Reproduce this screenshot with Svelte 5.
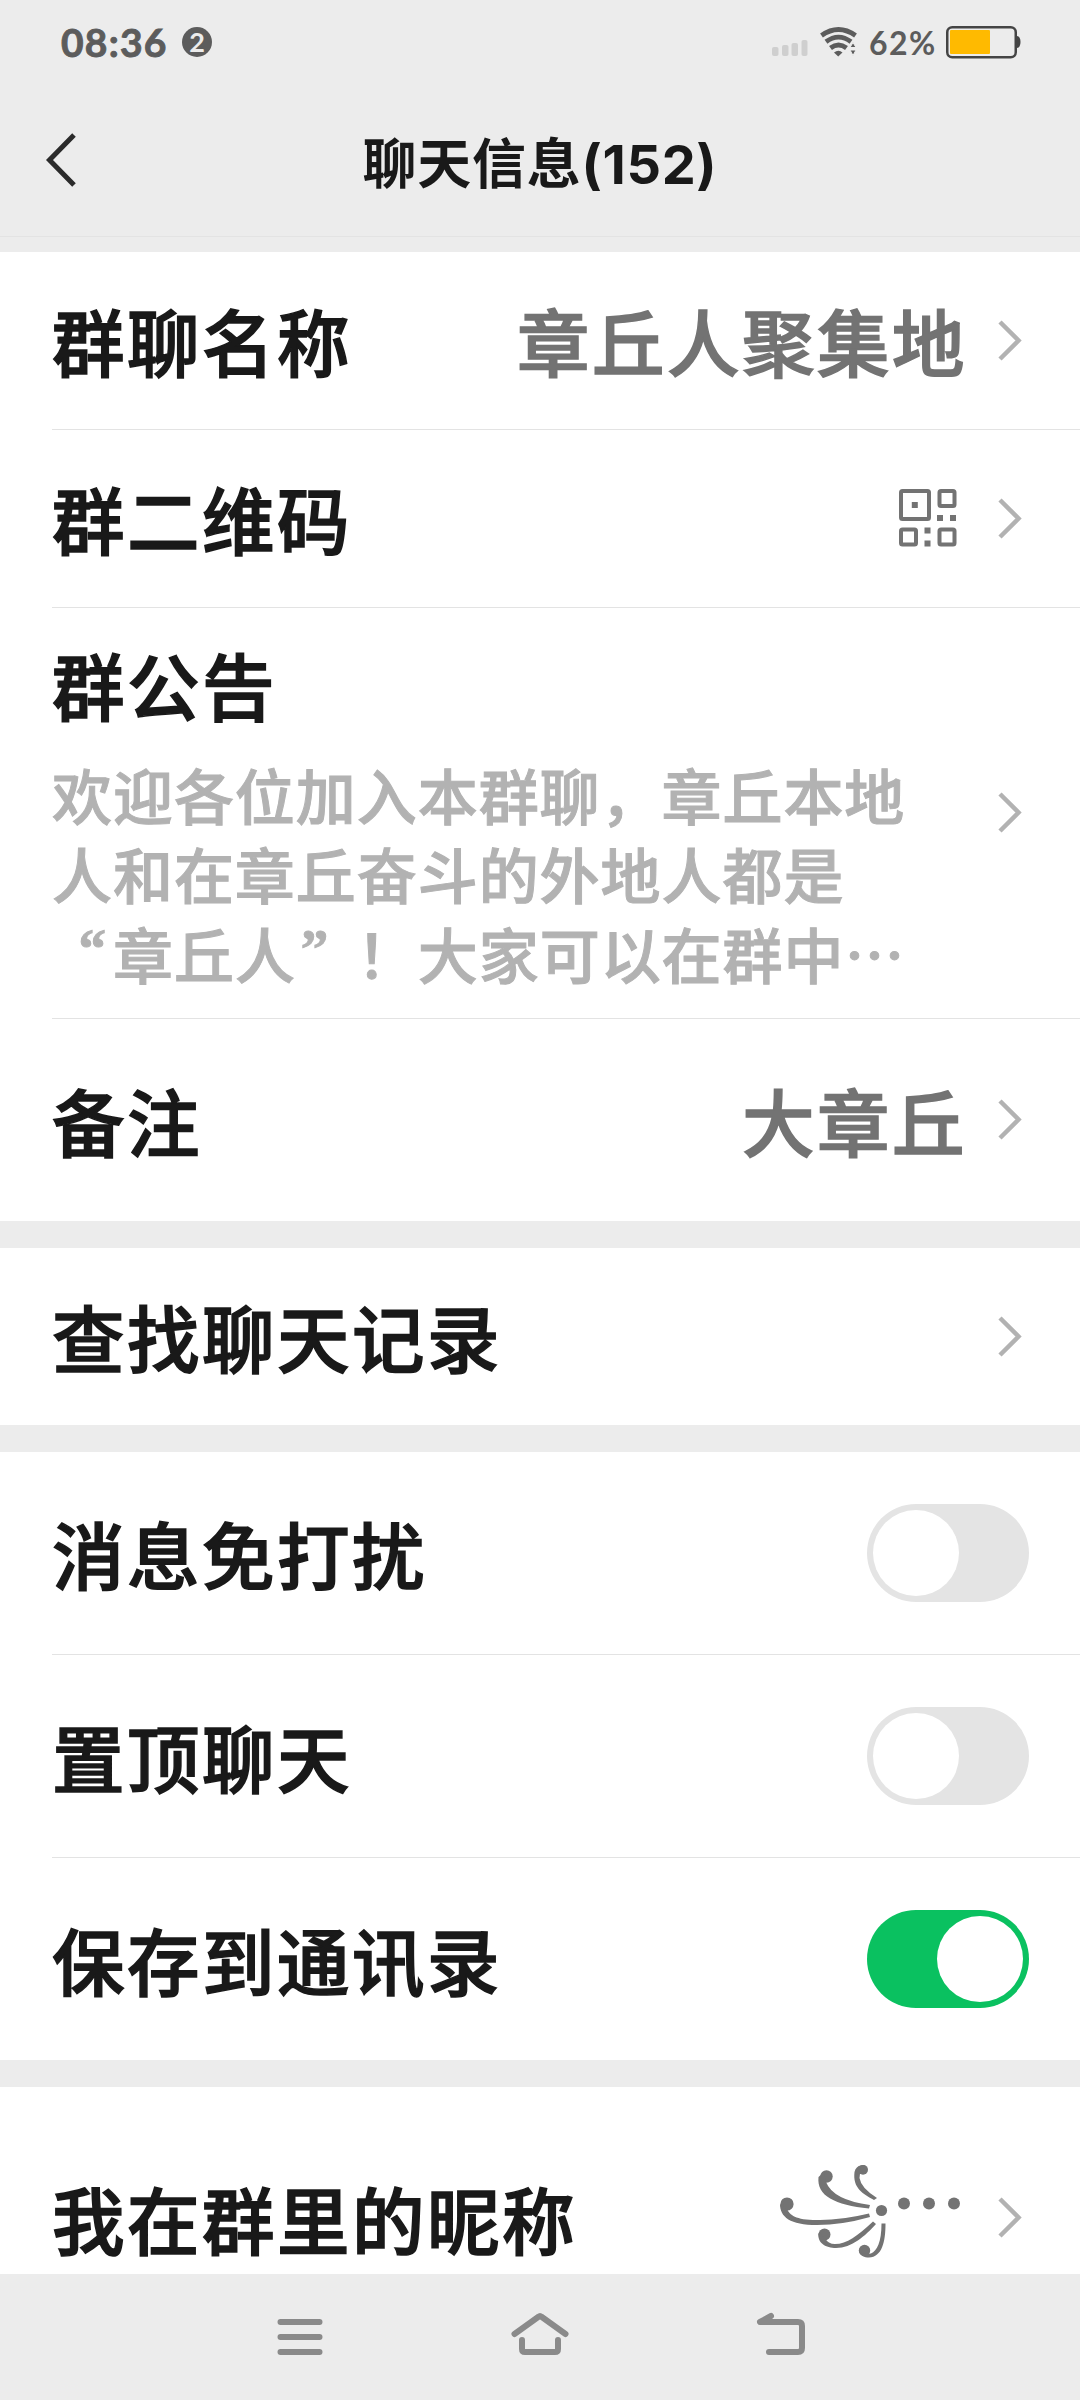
<script lang="ts">
    const title = "聊天信息";
    const memberCount = 152;

    const notice = ["欢迎各位加入本群聊，章丘本地", "人和在章丘奋斗的外地人都是"];

    let switches = $state([
        { label: "消息免打扰", on: false },
        { label: "置顶聊天", on: false },
        { label: "保存到通讯录", on: true },
    ]);
</script>

{#snippet arrow()}
    <svg class="arrow" width="24" height="42" viewBox="0 0 24 42">
        <path d="M2 2L20.500 20.500L2 39" fill="none" stroke="#b2b2b2" stroke-width="4.500" />
    </svg>
{/snippet}

<div class="screen">
    <div class="status">
        <span class="time">08:36</span>
        <span class="badge">2</span>
        <svg class="signal" width="36" height="18" viewBox="0 0 36 18" fill="#cfcfcf">
            <rect x="0" y="8" width="6.500" height="9" rx="2" />
            <rect x="10" y="6" width="6.500" height="11" rx="2" />
            <rect x="19.500" y="4" width="6.500" height="13" rx="2" />
            <rect x="29.500" y="1" width="6" height="16" rx="2" />
        </svg>
        <svg class="wifi" width="38" height="30" viewBox="0 0 38 30" fill="none" stroke="#5c5c5c" stroke-width="4.800">
            <path d="M1.500 8.500Q18.500 -3.500 35.500 8.500" />
            <path d="M6 14.800Q18.500 5.500 31 14.800" />
            <path d="M10.500 21Q18.500 15 26.500 21" />
            <path d="M14 25.500Q18.500 22 22.500 25.500L18.200 29.500Z" fill="#5c5c5c" stroke="none" />
            <path d="M30 20.500L33 15.500L36 20.500ZM30 23L33 28.500L36 23Z" fill="#5c5c5c" stroke="#ececec" stroke-width="1" />
        </svg>
        <span class="percent">62%</span>
        <svg class="battery" width="76" height="34" viewBox="0 0 76 34">
            <rect x="1.250" y="2.250" width="68.500" height="30" rx="5" fill="none" stroke="#444" stroke-width="2.500" />
            <rect x="4" y="5" width="40" height="24" rx="1" fill="#ffba00" />
            <path d="M71 11Q74.500 11.500 74.500 17Q74.500 22.500 71 23Z" fill="#444" />
        </svg>
    </div>

    <header>
        <svg class="back" width="32" height="56" viewBox="0 0 32 56">
            <path d="M29 3L4.500 28L29 53" fill="none" stroke="#2b2b2b" stroke-width="5" />
        </svg>
        <h1>{title}({memberCount})</h1>
    </header>

    <section>
        <div class="row">
            <span class="label">群聊名称</span>
            <span class="value">章丘人聚集地</span>
            {@render arrow()}
        </div>
        <div class="row">
            <span class="label">群二维码</span>
            <svg class="qr" width="58" height="58" viewBox="0 0 58 58" fill="none" stroke="#737373" stroke-width="4">
                <rect x="2" y="2" width="28" height="28" rx="1.500" />
                <rect x="40.500" y="2" width="15" height="15" rx="1.500" />
                <rect x="2" y="40.500" width="15" height="15" rx="1.500" />
                <rect x="40.500" y="40.500" width="15" height="15" rx="1.500" />
                <path d="M12.800 13h6v6h-6zM38 26h6v6h-6zM51 26h6v6h-6zM25.500 38.500h6v6h-6zM25.500 51.500h6v6h-6z" fill="#737373" stroke="none" />
            </svg>
            {@render arrow()}
        </div>
        <div class="row notice">
            <div class="notice-body">
                <span class="label">群公告</span>
                <p>
                    {#each notice as line}
                        <span class="line">{line}</span>
                    {/each}
                    <span class="line"><span class="quote open">“</span>章丘人<span class="quote">”</span>！大家可以在群中…</span>
                </p>
            </div>
            {@render arrow()}
        </div>
        <div class="row tall">
            <span class="label">备注</span>
            <span class="value">大章丘</span>
            {@render arrow()}
        </div>
    </section>

    <section>
        <div class="row">
            <span class="label">查找聊天记录</span>
            {@render arrow()}
        </div>
    </section>

    <section>
        {#each switches as item}
            <div class="row tall">
                <span class="label">{item.label}</span>
                <button class="switch" class:on={item.on} aria-label={item.label} onclick={() => (item.on = !item.on)}>
                    <span class="knob"></span>
                </button>
            </div>
        {/each}
    </section>

    <section class="last">
        <div class="row nickname">
            <span class="label">我在群里的昵称</span>
            <svg class="flourish" width="182" height="96" viewBox="0 0 182 96" fill="#737373">
                <circle cx="7" cy="39" r="6.600" />
                <circle cx="46.500" cy="11.500" r="6.200" />
                <circle cx="83" cy="4.800" r="5" />
                <circle cx="44.500" cy="69.500" r="6" />
                <circle cx="84.500" cy="85.500" r="5.700" />
                <circle cx="101.500" cy="45.500" r="5.600" />
                <circle cx="124" cy="38.500" r="6" />
                <circle cx="149" cy="38.500" r="6" />
                <circle cx="174" cy="38.500" r="6" />
                <path d="M0 39C0 52 10 60 37 60Q62 60 90 52L89 48.500Q60 55.500 37 55C15 55 10 50 7 44Z" />
                <path d="M38.500 12C36.500 31 55 40 89 43.500L90 40Q53 35 46 17L44 7Z" />
                <path d="M74.500 7C72.500 23 83 29 94 35L97 33Q81 23 79.500 13L81 0.500Q76 1 74.500 7Z" />
                <path d="M38.500 68C37 78 46 83 56 83C72 83 85 71 96 59L93 56.500C77 71 67 79 55 79Q48 79 45 73Z" />
                <path d="M79.500 87C81 91 84 92.500 89 92.500C102 92 105.500 77 105.500 58.500H101.500C101.500 77 97 86 91 88.500L86 89Z" />
            </svg>
            {@render arrow()}
        </div>
    </section>

    <nav>
        <svg width="46" height="44" viewBox="0 0 46 44">
            <path d="M3.500 7H42.500M3.500 22H42.500M3.500 37H42.500" />
        </svg>
        <svg width="60" height="44" viewBox="0 0 60 44">
            <path d="M4.500 19L28.500 1.800Q30 0.500 31.500 1.800L55.500 19M12 25V34Q12 37 15 37H45Q48 37 48 34V25" />
        </svg>
        <svg width="50" height="44" viewBox="0 0 50 44">
            <path d="M14 1L3 7H41Q45 7 45 11V33Q45 37 41 37H12" />
        </svg>
    </nav>
</div>

<style>
    :global(body) {
        background: #ececec;
    }

    .screen {
        width: 1080px;
        height: 2400px;
        display: flex;
        flex-direction: column;
        overflow: hidden;
        background: #ececec;
        color: #191919;
        font-family: "Noto Sans CJK SC", sans-serif;
        font-weight: 500;
    }

    .status {
        flex: none;
        display: flex;
        align-items: center;
        height: 84px;
        padding: 0 58px 0 61px;
        box-sizing: border-box;
        color: #5c5c5c;
        font-family: Lato, sans-serif;
        font-weight: 700;
    }

    .time {
        width: 121px;
        font-size: 39px;
        letter-spacing: 1.200px;
        -webkit-text-stroke: 0.900px currentColor;
    }

    .badge {
        width: 30px;
        height: 30px;
        border-radius: 50%;
        background: #5c5c5c;
        color: #ececec;
        font-size: 27px;
        line-height: 29px;
        text-align: center;
    }

    .signal {
        margin: 12px 12px 0 auto;
    }

    .wifi {
        margin-right: 11px;
    }

    .percent {
        width: 77px;
        padding-top: 1px;
        font-size: 32px;
        letter-spacing: 1.500px;
    }

    header {
        flex: none;
        display: grid;
        grid-template-columns: 120px 1fr 120px;
        align-items: center;
        height: 152px;
        border-bottom: 1px solid #e3e3e3;
    }

    .back {
        margin: 0 0 0 45px;
    }

    h1 {
        margin: 0;
        font-family: Inter, "Noto Sans CJK SC", sans-serif;
        font-size: 54px;
        font-weight: 700;
        letter-spacing: 0.7px;
        text-align: center;
        white-space: nowrap;
    }

    header + section {
        margin-top: 15px;
    }

    section {
        flex: none;
        margin-bottom: 27px;
        padding-left: 52px;
        background: #fff;
    }

    .row {
        display: flex;
        align-items: center;
        height: 177px;
        padding-right: 58px;
    }

    .row + .row {
        border-top: 1px solid #e3e3e3;
    }

    .tall {
        height: 202px;
    }

    .label,
    .value {
        margin-bottom: 1px;
        font-size: 72.500px;
        letter-spacing: 2.500px;
        line-height: 100px;
        white-space: nowrap;
        -webkit-text-stroke: 1.500px currentColor;
    }

    .label {
        margin-right: auto;
    }

    .value {
        margin-right: -3px;
        color: #737373;
    }

    .arrow {
        flex: none;
        margin-left: 34px;
    }

    .qr {
        margin: 0 7px 1px 0;
    }

    .flourish {
        margin: 0 2px 10px 0;
    }

    .notice {
        height: 410px;
    }

    .notice-body {
        margin-right: auto;
    }

    p {
        margin: 20px 0 0;
        color: #b2b2b2;
        font-size: 60px;
        letter-spacing: 0.950px;
        line-height: 79.500px;
        white-space: nowrap;
        -webkit-text-stroke: 1px currentColor;
    }

    .line {
        display: block;
    }

    .quote {
        display: inline-block;
        width: 61px;
        padding-left: 5px;
        box-sizing: border-box;
        font-family: "Liberation Serif", serif;
        font-weight: 700;
        font-size: 55px;
        line-height: 60px;
        vertical-align: 12px;
    }

    .quote.open {
        padding: 0 6px 0 0;
        text-align: right;
    }

    .switch {
        display: flex;
        width: 162px;
        height: 98px;
        box-sizing: border-box;
        margin-right: -7px;
        padding: 6px;
        border: 0;
        border-radius: 49px;
        background: #e4e4e4;
    }

    .switch.on {
        justify-content: flex-end;
        background: #0ac160;
    }

    .knob {
        width: 86px;
        height: 86px;
        border-radius: 50%;
        background: #fff;
    }

    .last {
        height: 187px;
        margin-bottom: 0;
        overflow: hidden;
    }

    .nickname {
        height: 262px;
    }

    nav {
        flex: none;
        display: flex;
        justify-content: space-between;
        height: 126px;
        padding: 41px 273px 0 277px;
        box-sizing: border-box;
        background: #ececec;
    }

    nav svg {
        fill: none;
        stroke: #8a8a8a;
        stroke-width: 6;
        stroke-linecap: round;
        stroke-linejoin: round;
        overflow: visible;
    }
</style>
